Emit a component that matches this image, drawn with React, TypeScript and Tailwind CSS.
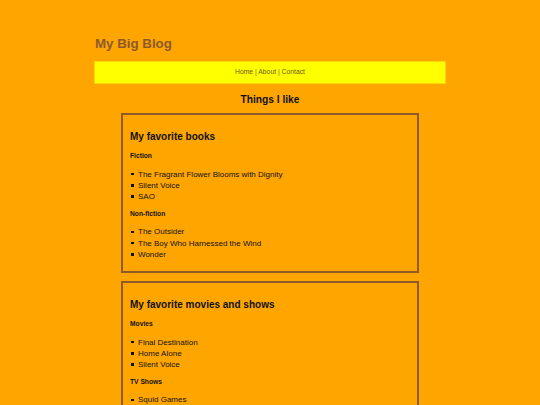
import React from "react";

const Card = ({ title, groups }: { title: string; groups: { name: string; items: string[] }[] }) => (
  <section className="border-2 border-[#8f5a26] px-[7px] pt-[15.5px] pb-[11px]">
    <h3 className="text-[10px] leading-[12px] font-bold text-[#111]">{title}</h3>
    {groups.map((g, i) => (
      <div key={g.name}>
        <h4 className={`text-[6.7px] leading-[8px] font-bold text-[#111] ${i === 0 ? "mt-[9.5px]" : "mt-[7.5px]"}`}>{g.name}</h4>
        <ul className="mt-[8.5px] text-[8px] leading-[11.25px] text-[#111]">
          {g.items.map((it) => (
            <li key={it} className="flex items-center">
              <span className="ml-[1px] mr-[4.5px] w-[2.5px] h-[2.5px] bg-[#111] shrink-0" />
              <span>{it}</span>
            </li>
          ))}
        </ul>
      </div>
    ))}
  </section>
);

export default function App() {
  return (
    <div className="h-[405px] overflow-hidden bg-[#ffa500] [transform:translateZ(0)]" style={{ fontFamily: '"Liberation Sans", Arial, sans-serif' }}>
      <div className="w-[352px] ml-[94px] pt-[35.5px]">
        <h1 className="pl-[1px] text-[13.3px] leading-[16px] font-bold text-[#8b5a2b]">My Big Blog</h1>
        <nav className="mt-[9.5px] h-[23px] border border-[#ffd400] bg-[#ffff00] flex items-center justify-center text-[6.8px] text-[#6e5a24]">
          Home | About | Contact
        </nav>
        <h2 className="mt-[9.5px] text-center text-[10.2px] leading-[12px] font-bold text-[#111]">Things I like</h2>
        <div className="mt-[7.5px] mx-[27px] flex flex-col gap-[8px]">
          <Card
            title="My favorite books"
            groups={[
              { name: "Fiction", items: ["The Fragrant Flower Blooms with Dignity", "Silent Voice", "SAO"] },
              { name: "Non-fiction", items: ["The Outsider", "The Boy Who Harnessed the Wind", "Wonder"] },
            ]}
          />
          <Card
            title="My favorite movies and shows"
            groups={[
              { name: "Movies", items: ["Final Destination", "Home Alone", "Silent Voice"] },
              { name: "TV Shows", items: ["Squid Games", "Stranger Things", "Alice in Borderland"] },
            ]}
          />
        </div>
      </div>
    </div>
  );
}
